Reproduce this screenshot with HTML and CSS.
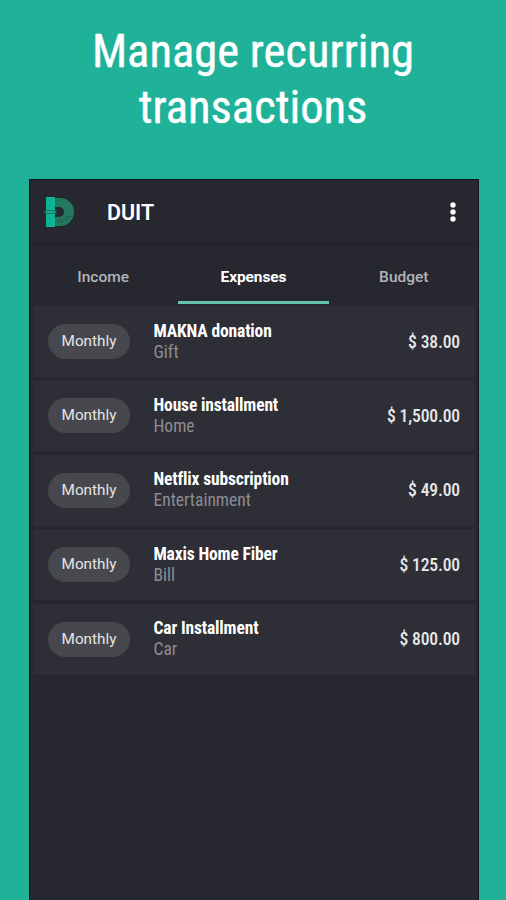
FILE: index.html
```html
<!DOCTYPE html>
<html lang="en">
<head>
<meta charset="UTF-8">
<meta name="viewport" content="width=device-width, initial-scale=1.0">
<title>DUIT</title>
<link rel="stylesheet" href="styles.css">
</head>
<body>
<h1 class="headline">Manage recurring<br>transactions</h1>
<div class="phone">
    <header class="app-bar">
        <svg class="logo" width="32" height="32" viewBox="0 0 32 32">
            <path d="M11 2h5a14 14 0 0 1 0 28h-5v-9h4a5 5 0 0 0 0-10h-4z" fill="#23795f"/>
            <path d="M13 27l3-4 2 4 2-5 3 3 0-5 4 1" fill="none" stroke="#1f604f" stroke-width="1"/>
            <path d="M2 1h9v30H2z" fill="#0fb592"/>
            <path d="M1 14.5h12M1 17.5h12" stroke="#1c6d5c" stroke-width="1.2"/>
            <path d="M0 16h12" stroke="#17a384" stroke-width="1"/>
        </svg>
        <span class="app-name">DUIT</span>
        <svg class="more" width="8" height="22" viewBox="0 0 8 22" fill="#fff">
            <circle cx="4" cy="4" r="2.7"/>
            <circle cx="4" cy="11" r="2.7"/>
            <circle cx="4" cy="18" r="2.7"/>
        </svg>
    </header>
    <nav class="tabs">
        <a class="tab">Income</a>
        <a class="tab active">Expenses</a>
        <a class="tab">Budget</a>
    </nav>
    <ul class="list">
        <li class="item">
            <span class="chip">Monthly</span>
            <div class="info">
                <span class="title">MAKNA donation</span>
                <span class="category">Gift</span>
            </div>
            <span class="amount">$ 38.00</span>
        </li>
        <li class="item">
            <span class="chip">Monthly</span>
            <div class="info">
                <span class="title">House installment</span>
                <span class="category">Home</span>
            </div>
            <span class="amount">$ 1,500.00</span>
        </li>
        <li class="item">
            <span class="chip">Monthly</span>
            <div class="info">
                <span class="title">Netflix subscription</span>
                <span class="category">Entertainment</span>
            </div>
            <span class="amount">$ 49.00</span>
        </li>
        <li class="item">
            <span class="chip">Monthly</span>
            <div class="info">
                <span class="title">Maxis Home Fiber</span>
                <span class="category">Bill</span>
            </div>
            <span class="amount">$ 125.00</span>
        </li>
        <li class="item">
            <span class="chip">Monthly</span>
            <div class="info">
                <span class="title">Car Installment</span>
                <span class="category">Car</span>
            </div>
            <span class="amount">$ 800.00</span>
        </li>
    </ul>
</div>
</body>
</html>
```
FILE: styles.css
```css
* {
    box-sizing: border-box;
}
body {
    margin: 0;
    height: 900px;
    overflow: hidden;
    background-color: #1fb299;
    font-family: Roboto, sans-serif;
    display: flex;
    flex-direction: column;
}
.headline {
    margin: 0;
    padding-top: 23px;
    height: 179px;
    font-size: 46.6px;
    font-weight: 400;
    font-stretch: 75%;
    line-height: 56px;
    text-align: center;
    color: #fff;
    -webkit-text-stroke: 0.4px #fff;
}
.phone {
    flex: 1;
    width: 450px;
    margin-left: 29px;
    background-color: #27272f;
    border: 1px solid #15141a;
    border-bottom: none;
}
.app-bar {
    display: flex;
    align-items: center;
    height: 64px;
    padding: 0 21.5px 0 14px;
    border-bottom: 1px solid #1f1f26;
}
.app-name {
    margin-left: 31px;
    padding-top: 2px;
    font-size: 21.5px;
    font-weight: 600;
    color: #fff;
}
.more {
    margin-left: auto;
}
.tabs {
    display: flex;
    height: 60px;
    margin: 0 -1px 0 -2px;
}
.tab {
    flex: 1;
    padding-top: 6px;
    border-bottom: 3px solid transparent;
    font-size: 15.5px;
    font-weight: 500;
    line-height: 55px;
    text-align: center;
    color: #b3b3b8;
}
.tab.active {
    font-weight: 700;
    letter-spacing: -0.1px;
    color: #fff;
    border-bottom-color: #63c3ab;
}
.list {
    display: flex;
    flex-direction: column;
    gap: 3.4px;
    margin: 2px 3px 0;
    padding: 0;
    list-style: none;
}
.item {
    display: flex;
    align-items: center;
    height: 71px;
    padding: 0 15px;
    background-color: #2e2e36;
}
.chip {
    width: 82px;
    height: 35px;
    border-radius: 18px;
    background-color: #47484d;
    font-size: 15.3px;
    line-height: 35px;
    text-align: center;
    color: #e4e4e6;
}
.info {
    display: flex;
    flex-direction: column;
    margin-left: 23.5px;
}
.title {
    font-size: 17.5px;
    font-weight: 700;
    font-stretch: 75%;
    letter-spacing: -0.15px;
    line-height: 21px;
    color: #fff;
}
.category {
    font-size: 17.5px;
    font-stretch: 75%;
    line-height: 21px;
    color: #8d8d92;
}
.amount {
    margin-left: auto;
    font-size: 17.6px;
    font-weight: 500;
    font-stretch: 75%;
    letter-spacing: -0.15px;
    color: #e8e8ea;
}
```
